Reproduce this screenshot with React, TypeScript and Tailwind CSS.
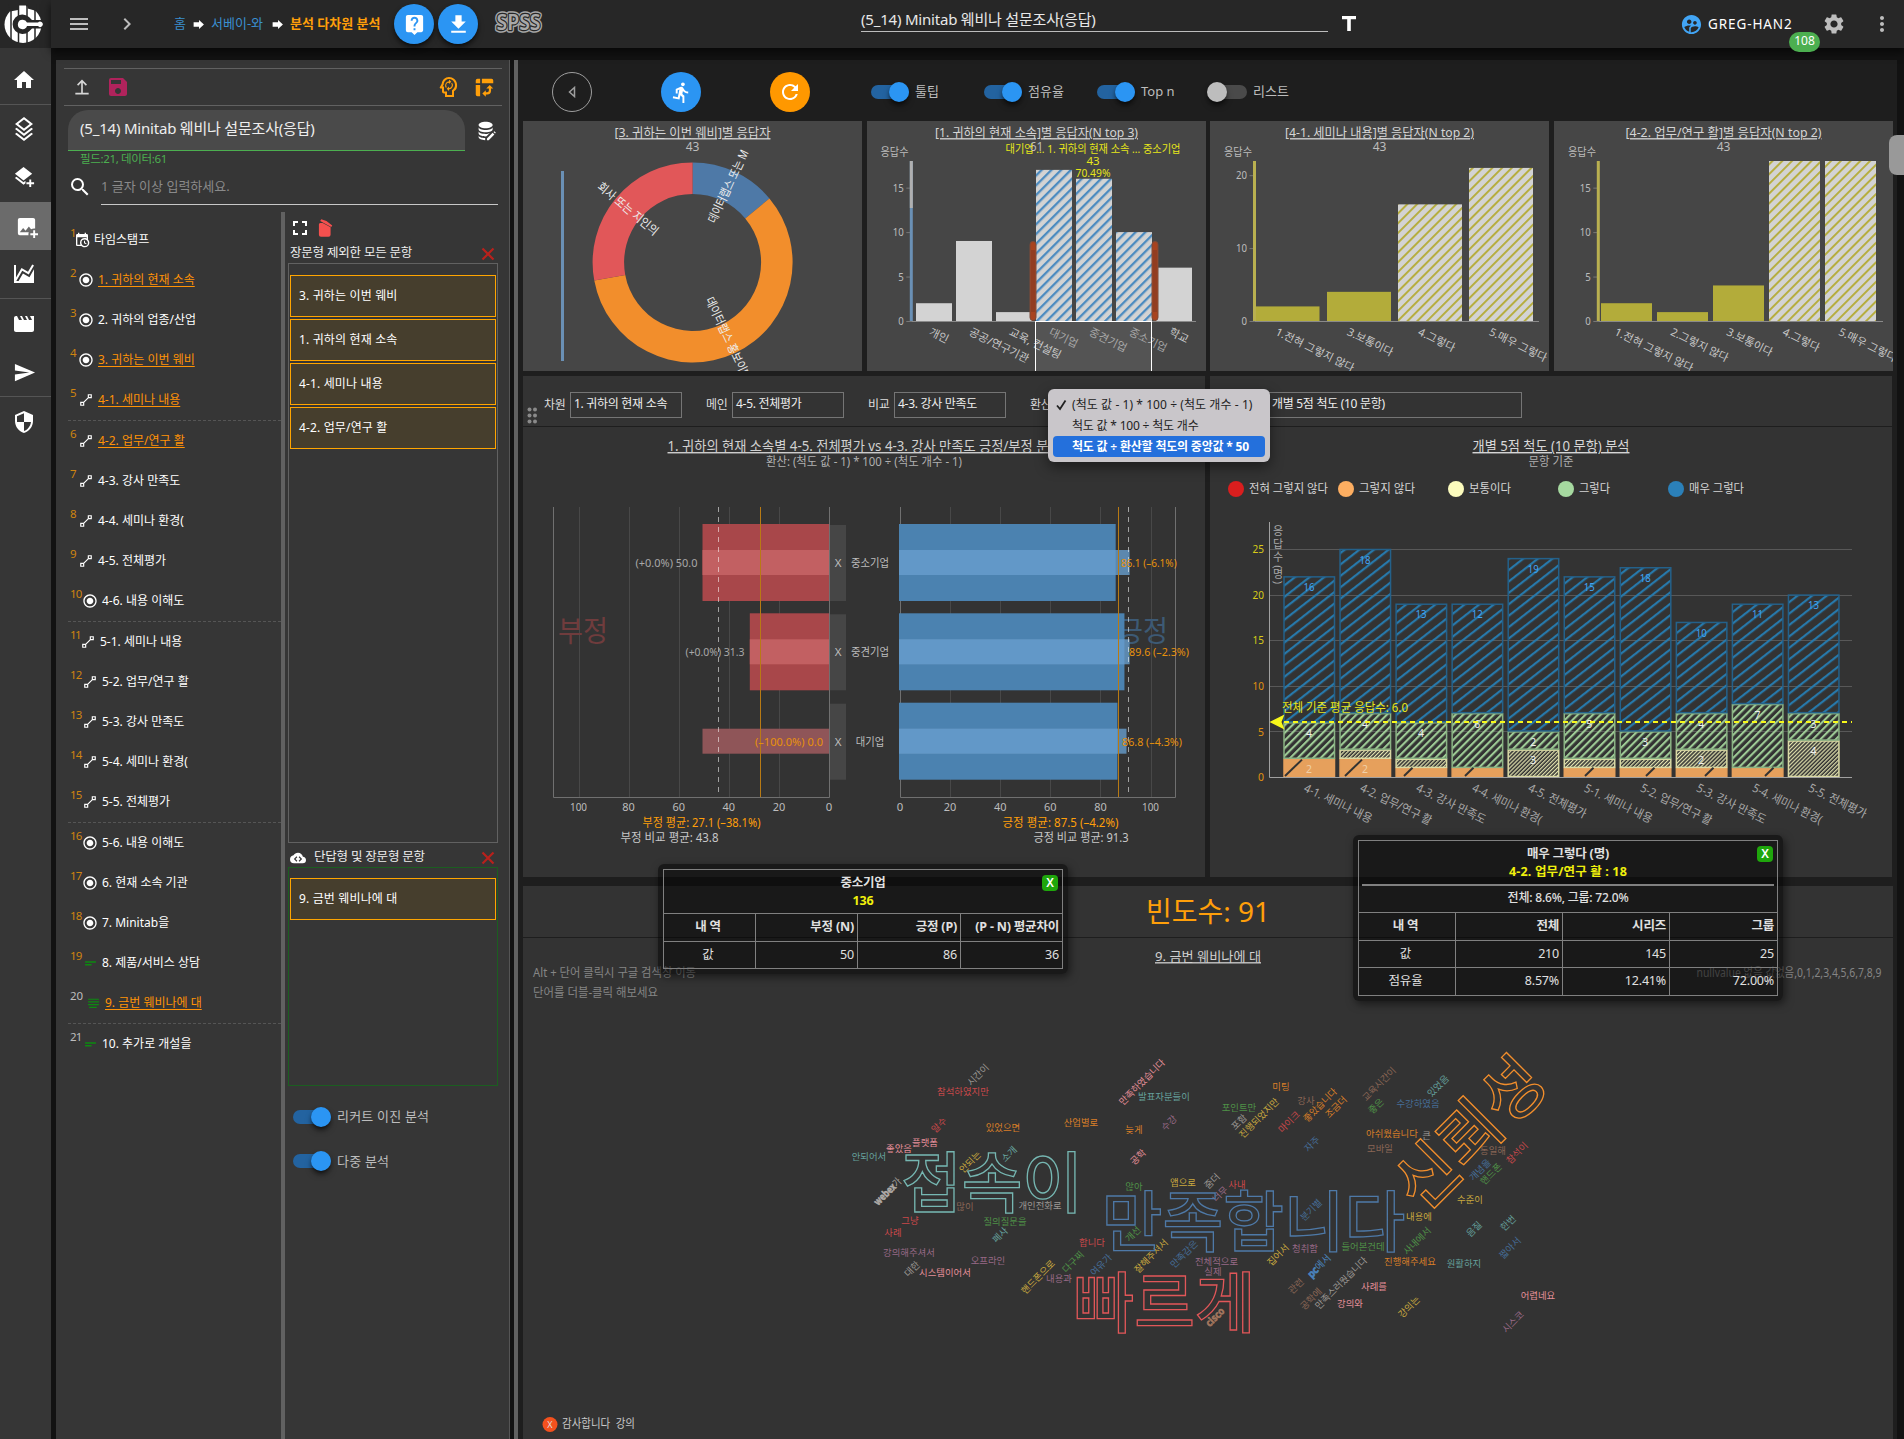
import React from "react";
import {
  MdHome, MdMovie, MdSend, MdSecurity, MdMenu, MdChevronRight, MdLiveHelp, MdDownload, MdSettings, MdMoreVert,
  MdSave, MdSearch, MdFullscreen, MdRadioButtonChecked, MdDirectionsRun, MdRefresh, MdSupervisedUserCircle,
} from "react-icons/md";

type Anchor = "start" | "middle" | "end";

const Mdi = ({ d, s = 24, className = "" }: { d: string; s?: number; className?: string }) => (
  <svg width={s} height={s} viewBox="0 0 24 24" fill="currentColor" className={className}>
    <path fillRule="evenodd" d={d} />
  </svg>
);

const P = {
  layers: "M12 0L3 7L12 14L21 7L12 0ZM12 2.53L17.74 7L12 11.47L6.26 7ZM19.37 10.73L12 16.47L4.62 10.74L3 12L12 19L21 12ZM19.37 15.73L12 21.47L4.62 15.74L3 17L12 24L21 17Z",
  layersPlus: "M11 1L2 8L11 15L20 8ZM2 12.5L11 19.5L13 18V15.5L11 17L3.6 11.25ZM17 14V17H14V19H17V22H19V19H22V17H19V14Z",
  imagePlus: "M5,3A2,2 0 0,0 3,5V19A2,2 0 0,0 5,21H14.09C14.03,20.67 14,20.34 14,20C14,19.32 14.12,18.64 14.35,18H5L8.5,13.5L11,16.5L14.5,12L16.73,14.97C17.7,14.34 18.84,14 20,14C20.34,14 20.67,14.03 21,14.09V5C21,3.89 20.1,3 19,3H5M19,16V19H16V21H19V24H21V21H24V19H21V16H19Z",
  chart: "M17.45,15.18L22,7.31V21H2V3H4V15.54L9.5,6L16,9.78L20.24,2.45L21.97,3.45L16.74,12.5L10.23,8.75L4.31,19H6.57L10.96,11.44L17.45,15.18Z",
  upload: "M12 3L6 9L7.4 10.4L11 6.8V19H13V6.8L16.6 10.4L18 9ZM4 19H20V21H4Z",
  head: "M13 2C9.1 2 6 5 5.7 8.8L3.8 12.3C3.5 12.8 3.9 13.4 4.5 13.4H6V16.5C6 17.6 6.9 18.5 8 18.5H9V22H18V16.3C20.4 15 21.5 12.300 21 9C20.500 5 17 2 13 2ZM13 4C16.300 4 19 6.700 19 10C19 12.400 17.800 14.200 16 15.200V20H11V16.500H8V11.500H6.600L7.700 9.500C7.700 6.500 10 4 13 4ZM13 5.500V7.500C11.500 7.500 10.200 8.700 10.200 10.300C10.200 11 10.400 11.500 10.800 12L9.900 12.900A4.200 4.200 0 0 1 13 6.200V4.600L15.300 6.800L13 9ZM15.200 8.600L16.100 7.700A4.200 4.200 0 0 1 13 14.400V16L10.700 13.800L13 11.500V13.100C14.500 13.100 15.800 11.900 15.800 10.300C15.800 9.600 15.600 9 15.200 8.600Z",
  table: "M2 4A2 2 0 0 1 4 2H7V7H2ZM9 2H20A2 2 0 0 1 22 4V7H9ZM2 9H7V22H4A2 2 0 0 1 2 20ZM18 9L22 13H19.500V15.500A4.500 4.500 0 0 1 15 20H13.500V22.500L9.500 18.800L13.500 15V17.500H15A2 2 0 0 0 17 15.500V13H14Z",
  db: "M11 2C6.500 2 3 3.600 3 5.700S6.500 9.500 11 9.500S19 7.800 19 5.700S15.500 2 11 2ZM3 8V10.500C3 12.500 6.500 14 11 14S19 12.500 19 10.500V8C19 10.100 15.500 11.500 11 11.500S3 10.100 3 8ZM3 12.700V15.200C3 17.200 6.500 18.800 11 18.800L12 18.700L16 14.600C14.500 15.600 13 16 11 16C6.500 16 3 14.800 3 12.700ZM3 17.500V19.500C3 21.500 6.500 23 10.500 23V20.700C6.500 20.700 3 19.600 3 17.500ZM12.500 21L19 14.500L21 16.500L14.500 23H12.500ZM21 12.800L22.700 14.500L21.700 15.500L20 13.800Z",
  trash: "M5 3.500L6.300 1.500L12.500 3.500L19.500 9L18.300 10.700ZM3.500 7.500A2 2 0 0 1 5.500 6H8L17.500 11V20A2.500 2.500 0 0 1 15 22.500H6A2.500 2.500 0 0 1 3.500 20Z",
  calendar: "M15,13H16.500V15.820L18.940,17.230L18.190,18.530L15,16.690V13M19,8H5V19H9.670C9.240,18.090 9,17.070 9,16A7,7 0 0,1 16,9C17.070,9 18.090,9.240 19,9.670V8M5,21C3.890,21 3,20.100 3,19V5C3,3.890 3.890,3 5,3H6V1H8V3H16V1H18V3H19A2,2 0 0,1 21,5V11.100C22.240,12.360 23,14.090 23,16A7,7 0 0,1 16,23C14.090,23 12.360,22.240 11.100,21H5M16,11.150A4.850,4.850 0 0,0 11.150,16C11.150,18.680 13.320,20.850 16,20.850A4.850,4.850 0 0,0 20.850,16C20.850,13.320 18.680,11.150 16,11.150Z",
  line: "M15 2V7.600L7.600 15H2V22H9V16.400L16.400 9H22V2ZM17 4H20V7H17ZM4 17H7V20H4Z",
  short: "M2 8H22V10.500H2ZM2 13H14V15.500H2Z",
  long: "M2 3H22V5.200H2ZM2 8H22V10.200H2ZM2 13H22V15.200H2ZM4 18H18V20.200H4Z",
  cloud: "M19.350 10C18.670 6.600 15.640 4 12 4C9.110 4 6.600 5.640 5.350 8C2.340 8.400 0 10.900 0 14A6 6 0 0 0 6 20H19A5 5 0 0 0 24 15C24 12.400 21.950 10.200 19.350 10ZM9.800 9.500L11 10.700L8.300 13.500L11 16.200L9.800 17.500L5.800 13.500ZM14.200 9.500L18.200 13.500L14.200 17.500L13 16.200L15.700 13.500L13 10.700Z",
  arrow: "M3 8H13V3.500L22 12L13 20.500V16H3Z",
};

const Tx = ({
  x, y, children, a = "start", s = 12, f = "#bdbdbd", r = 0, w, u,
}: {
  x: number; y: number; children: React.ReactNode; a?: Anchor; s?: number; f?: string; r?: number; w?: number; u?: boolean;
}) => (
  <text
    x={x} y={y} dy=".36em" textAnchor={a} fontSize={s} fill={f}
    textLength={w} lengthAdjust={w ? "spacingAndGlyphs" : undefined}
    transform={r ? `rotate(${r} ${x} ${y})` : undefined}
    className={u ? "underline underline-offset-2" : ""}
  >
    {children}
  </text>
);

const Toggle = ({ on = true, label, className = "" }: { on?: boolean; label: string; className?: string }) => (
  <div className={`flex items-center ${className}`}>
    <div className={`relative h-[14px] w-[38px] rounded-full ${on ? "bg-[#2363a0]" : "bg-[#4a4a4a]"}`}>
      <div className={`absolute -top-[3px] size-5 rounded-full shadow-md shadow-black/60 ${on ? "right-0 bg-[#2b95f3]" : "-left-0.5 bg-[#bdbdbd]"}`} />
    </div>
    <span className="ml-1.5 text-[13px] text-[#bdbdbd]">{label}</span>
  </div>
);

const NAV: { icon: React.ReactNode; cls: string }[] = [
  { icon: <MdHome size={24} />, cls: "h-[49px] pb-0 mt-2 border-b border-[#555]" },
  { icon: <Mdi d={P.layers} />, cls: "h-[48px]" },
  { icon: <Mdi d={P.layersPlus} s={23} />, cls: "h-[49px]" },
  { icon: <Mdi d={P.imagePlus} s={23} className="translate-x-0.5" />, cls: "h-12 bg-[#6b6b6b]" },
  { icon: <Mdi d={P.chart} s={24} />, cls: "h-[49px] border-b border-[#555]" },
  { icon: <MdMovie size={24} />, cls: "h-[49px]" },
  { icon: <MdSend size={23} />, cls: "h-[49px] border-b border-[#555]" },
  { icon: <MdSecurity size={24} />, cls: "h-[49px]" },
];

const Sidebar = () => (
  <aside className="flex w-[51px] shrink-0 flex-col bg-[#363636] text-white">
    <div className="flex h-12 items-center bg-[#272727] pl-[3px]">
      <svg width="40" height="40" viewBox="3 5 40 40">
        <circle cx="23" cy="25.500" r="18.500" fill="#fff" />
        <path d="M19 6.500h7v6h-7z" fill="#fff" />
        <path d="M11 8v36M18.500 6v38M27 6v38M35 8v36" stroke="#272727" strokeWidth="1.500" />
        <path d="M8 5h10v6L10 12.500ZM27.500 5h9v7l-9-2.500z" fill="#272727" />
        <path d="M29 18A9.800 9.800 0 1 0 29 32.500L32 29.500H44V21H32Z" fill="#272727" />
        <path d="M22.500 20.800a4.700 4.700 0 0 1 4.500 2.700H38a2.700 2.700 0 1 1 0 3.600H27a4.700 4.700 0 1 1-4.500-6.300Z" fill="#fff" />
      </svg>
    </div>
    {NAV.map((n, i) => (
      <div key={i} className={`flex items-center justify-center pr-[3px] ${n.cls}`}>{n.icon}</div>
    ))}
  </aside>
);

const Header = () => (
  <header className="relative z-10 flex h-12 shrink-0 items-center bg-[#272727] shadow-[0_4px_8px_rgba(0,0,0,0.6)]">
    <div className="flex w-[434px] shrink-0 items-center text-[13px]">
      <MdMenu size={24} className="ml-4 text-[#bdbdbd]" />
      <MdChevronRight size={24} className="ml-6 text-[#bdbdbd]" />
      <span className="ml-[35px] w-[13px] text-[#3a8fd0]">홈</span>
      <Mdi d={P.arrow} s={13} className="ml-[5px] text-white" />
      <span className="ml-[6px] w-[53px] whitespace-nowrap text-[#3a8fd0]">서베이-와</span>
      <Mdi d={P.arrow} s={13} className="ml-[7px] text-white" />
      <span className="ml-[6px] w-[92px] whitespace-nowrap font-bold text-[#ff9f0a]">분석 다차원 분석</span>
      <div className="ml-3 flex size-10 shrink-0 items-center justify-center rounded-full bg-[#2b95f3] text-white shadow-md shadow-black/60"><MdLiveHelp size={23} /></div>
      <div className="ml-1 flex size-10 shrink-0 items-center justify-center rounded-full bg-[#2b95f3] text-white shadow-md shadow-black/60"><MdDownload size={25} /></div>
    </div>
    <svg width="56" height="28" className="-mt-[3px] ml-[6px] shrink-0 overflow-visible">
      <text x="27.500" y="21" textAnchor="middle" fontSize="22" textLength="44" lengthAdjust="spacingAndGlyphs" strokeWidth="5.500" stroke="#a8a8a8" fill="none" strokeLinejoin="round" className="font-semibold">SPSS</text>
      <text x="27.500" y="21" textAnchor="middle" fontSize="22" textLength="44" lengthAdjust="spacingAndGlyphs" strokeWidth="2.500" stroke="#272727" fill="#a8a8a8" strokeLinejoin="round" className="font-semibold [paint-order:stroke]">SPSS</text>
    </svg>
    <div className="-mt-3 ml-[314px] h-[27px] w-[467px] shrink-0 border-b border-[#bdbdbd] text-[15px] leading-[29px] tracking-[-0.2px] text-[#e8e8e8]">(5_14) Minitab 웨비나 설문조사(응답)</div>
    <svg width="14" height="16" className="ml-[14px]"><path d="M0 0h14v3.200H8.800V15H5.200V3.200H0Z" fill="#fff" /></svg>
    <MdSupervisedUserCircle size={23} className="ml-[324px] text-[#42a5f5]" />
    <span className="ml-[5px] w-[86px] text-[13.500px] tracking-[0.9px] text-white">GREG-HAN2</span>
    <MdSettings size={24} className="ml-[28px] text-[#bdbdbd]" />
    <MdMoreVert size={24} className="ml-6 text-[#bdbdbd]" />
    <div className="absolute left-[1738px] top-8 h-5 w-[31px] rounded-[10px] bg-[#4caf50] text-center text-[12px] leading-[18px] text-white">108</div>
  </header>
);

type Field = [string, "cal" | "radio" | "line" | "short" | "long", string, boolean?];
const FIELDS: Field[][] = [
  [["1", "cal", "타임스탬프"], ["2", "radio", "1. 귀하의 현재 소속", true], ["3", "radio", "2. 귀하의 업종/산업"], ["4", "radio", "3. 귀하는 이번 웨비", true], ["5", "line", "4-1. 세미나 내용", true]],
  [["6", "line", "4-2. 업무/연구 활", true], ["7", "line", "4-3. 강사 만족도"], ["8", "line", "4-4. 세미나 환경("], ["9", "line", "4-5. 전체평가"], ["10", "radio", "4-6. 내용 이해도"]],
  [["11", "line", "5-1. 세미나 내용"], ["12", "line", "5-2. 업무/연구 활"], ["13", "line", "5-3. 강사 만족도"], ["14", "line", "5-4. 세미나 환경("], ["15", "line", "5-5. 전체평가"]],
  [["16", "radio", "5-6. 내용 이해도"], ["17", "radio", "6. 현재 소속 기관"], ["18", "radio", "7. Minitab을"], ["19", "short", "8. 제품/서비스 상담"], ["20", "long", "9. 금번 웨비나에 대", true]],
  [["21", "short", "10. 추가로 개설을"]],
];

const numWidth = (n: string) => {
  if (n.length === 1) return "w-[7px]";
  if (n === "11") return "w-[9px] tracking-[-1.5px]";
  if (n === "20") return "w-[14px]";
  return "w-[11px] tracking-[-0.8px]";
};

const FieldIcon = ({ k }: { k: Field[1] }) => {
  if (k === "cal") return <Mdi d={P.calendar} s={16} className="-ml-1 mr-1 text-white" />;
  if (k === "radio") return <MdRadioButtonChecked size={16} className="mr-1 shrink-0 text-white" />;
  if (k === "line") return <Mdi d={P.line} s={14} className="mr-[5px] ml-px text-white" />;
  return <Mdi d={k === "short" ? P.short : P.long} s={13} className="ml-[2px] mr-[5px] text-[#0d8a10]" />;
};

const Card = ({ children }: { children: string }) => (
  <div className="mb-0.5 flex h-[42px] items-center border border-[#ffa500] bg-[#463e2d] pl-2 text-[12px] tracking-[0.15px] text-white">{children}</div>
);

const RedX = () => (
  <svg width="14" height="14" viewBox="0 0 14 14" className="ml-auto mr-[3px]">
    <path d="M1.500 1.500L12.500 12.500M12.500 1.500L1.500 12.500" stroke="#b8211c" strokeWidth="2.200" />
  </svg>
);

const LeftPanel = () => (
  <section className="flex w-[454px] shrink-0 flex-col border-r border-[#555] bg-[#363636]">
    <div className="mx-2 mt-2 flex h-[38px] w-[438px] items-center border-y border-[#616161] pl-2">
      <Mdi d={P.upload} s={20} className="text-[#d5d5d5]" />
      <MdSave size={24} className="ml-[14px] text-[#b0235c]" />
      <Mdi d={P.head} s={24} className="ml-[306px] text-[#ff9f0a]" />
      <Mdi d={P.table} s={21} className="ml-[14px] text-[#ff9f0a]" />
    </div>
    <div className="ml-3 mt-1 flex h-[41px] items-center">
      <div className="h-[41px] w-[397px] rounded-t-[20px] border-b border-[#4caf50] bg-[#4a4a4a] pl-3 text-[15px] leading-[37px] tracking-[-0.2px] text-[#eee]">(5_14) Minitab 웨비나 설문조사(응답)</div>
      <Mdi d={P.db} s={21} className="ml-[11px] text-white" />
    </div>
    <div className="ml-6 h-[17px] text-[11.500px] leading-[15px] tracking-[-0.35px] text-[#4caf50]">필드:21, 데이터:61</div>
    <div className="ml-3 flex h-[37px] items-center">
      <MdSearch size={24} className="text-white" />
      <div className="ml-[9px] h-[37px] w-[397px] border-b border-[#c8c8c8] text-[13px] leading-[36px] text-[#8a8a8a]">1 글자 이상 입력하세요.</div>
    </div>
    <div className="mt-[7px] flex flex-1">
      <div className="ml-3 w-[213px] pt-2">
        {FIELDS.map((g, i) => (
          <div key={i} className={i < FIELDS.length - 1 ? "border-b border-dashed border-[#555]" : ""}>
            {g.map(([n, k, t, sel]) => (
              <div key={n} className="flex h-10 items-center whitespace-nowrap pl-0.5">
                <span className={`-mt-[14px] mr-px text-[11.500px] ${numWidth(n)} ${Number(n) >= 20 ? "text-[#bdbdbd]" : "text-[#cf8410]"}`}>{n}</span>
                <FieldIcon k={k} />
                <span className={`text-[12px] ${sel ? "text-[#ff9206] underline underline-offset-2" : "text-white"}`}>{t}</span>
              </div>
            ))}
          </div>
        ))}
      </div>
      <div className="w-1 bg-[#616161]" />
      <div className="ml-[3px] w-[210px]">
        <div className="flex h-[31px] items-center">
          <MdFullscreen size={24} className="text-white" />
          <Mdi d={P.trash} s={20} className="ml-1 text-[#f5504e]" />
        </div>
        <div className="flex h-5 items-center pl-0.5 pt-px">
          <span className="text-[12.500px] tracking-[-0.2px] text-[#eee]">장문형 제외한 모든 문항</span>
          <RedX />
        </div>
        <div className="h-[580px] border border-[#616161] px-px pt-[11px]">
          <Card>3. 귀하는 이번 웨비</Card>
          <Card>1. 귀하의 현재 소속</Card>
          <Card>4-1. 세미나 내용</Card>
          <Card>4-2. 업무/연구 활</Card>
        </div>
        <div className="mt-1 flex h-5 items-center pt-px">
          <Mdi d={P.cloud} s={16} className="ml-0.5 text-white" />
          <span className="ml-2 text-[12.500px] tracking-[-0.2px] text-[#eee]">단답형 및 장문형 문항</span>
          <RedX />
        </div>
        <div className="h-[219px] border border-[#1b5e20] px-px pt-[10px]">
          <Card>9. 금번 웨비나에 대</Card>
        </div>
        <Toggle label="리커트 이진 분석" className="ml-[5px] mt-[21px] tracking-[0.2px]" />
        <Toggle label="다중 분석" className="ml-[5px] mt-[25px] tracking-[0.2px]" />
      </div>
    </div>
  </section>
);

const Hatch = ({ id, c, bg, w, gap, ang }: { id: string; c: string; bg?: string; w: number; gap: number; ang: number }) => (
  <pattern id={id} width={gap} height={gap} patternUnits="userSpaceOnUse" patternTransform={`rotate(${ang})`}>
    {bg && <rect width={gap} height={gap} fill={bg} />}
    <rect width={gap} height={w} fill={c} />
  </pattern>
);

const arc = (a0: number, a1: number) => {
  const cx = 692.6, cy = 262.4, R = 100, r = 68.5;
  const p = (a: number, q: number) => `${cx + q * Math.sin((a * Math.PI) / 180)} ${cy - q * Math.cos((a * Math.PI) / 180)}`;
  const l = a1 - a0 > 180 ? 1 : 0;
  return `M${p(a0, R)}A${R} ${R} 0 ${l} 1 ${p(a1, R)}L${p(a1, r)}A${r} ${r} 0 ${l} 0 ${p(a0, r)}Z`;
};

const Donut = () => (
  <svg width="339" height="250" viewBox="523 121 339 250" className="bg-[#464646]">
    <Tx x={692.5} y={132.500} a="middle" s={13} f="#d5d5d5" w={156} u>[3. 귀하는 이번 웨비]별 응답자</Tx>
    <Tx x={692.5} y={146.500} a="middle">43</Tx>
    <rect x="561" y="171" width="3" height="190" fill="#6a90b5" />
    <path d={arc(0, 50.200)} fill="#4e79a7" />
    <path d={arc(50.200, 259.500)} fill="#f28e2c" />
    <path d={arc(259.500, 360)} fill="#e15759" />
    <Tx x={728.200} y={186.300} a="middle" f="#eee" r={-64.900} w={79}>데이터랩스 또는 M</Tx>
    <Tx x={728.200} y={338.500} a="middle" f="#eee" r={64.900} w={90}>데이터랩스 홍보이메</Tx>
    <Tx x={628} y={208.700} a="middle" f="#eee" r={39.700} w={75}>회사 또는 지인의</Tx>
  </svg>
);

const Mini = ({ ox, title, tw, axisX, ticks, unit, bars, bw, color, hatch, labels, lo, sub, labelX, end, children }: {
  ox: number; title: string; tw: number; axisX: number; ticks: number[]; unit: number; bars: [number, number, boolean][]; bw: number;
  color: string; hatch: string; labels: string[]; lo: number; sub: string; labelX: number; end: number; children?: React.ReactNode;
}) => (
  <svg width="339" height="250" viewBox={`${ox} 121 339 250`} className="bg-[#464646]">
    <Tx x={ox + 169.500} y={132.500} a="middle" s={13} f="#d5d5d5" w={tw} u>{title}</Tx>
    <Tx x={labelX} y={152} a="middle" s={11} w={28}>응답수</Tx>
    {ticks.map((t) => (
      <g key={t}>
        <Tx x={axisX - 7.500} y={321 - t * unit} a="end" s={11} w={t > 9 ? 11 : 5.500}>{t}</Tx>
        <path d={`M${axisX - 5} ${321.500 - t * unit}h5`} stroke="#777" />
      </g>
    ))}
    {bars.map(([x, v, h], i) => {
      const top = Math.max(161, 321 - v * unit);
      return <rect key={i} x={x} y={top} width={bw} height={321 - top} fill={h ? `url(#${hatch})` : color} />;
    })}
    <path d={`M${axisX} 321.500H${end}`} stroke="#8a8a8a" />
    <rect x={axisX - 1.500} y="161" width="3" height="160" fill={color === "#d3d3d3" ? "#6a90b5" : "#b9b050"} />
    <Tx x={ox + 169.500} y={146.500} a="middle">{sub}</Tx>
    {bars.map(([x], i) => {
      const lx = x + bw / 2 + lo;
      return <Tx key={i} x={lx} y={331} s={11} f={color === "#d3d3d3" && i > 2 && i < 6 ? "#a0a0a0" : "#c8c8c8"} r={26}>{labels[i]}</Tx>;
    })}
    {children}
  </svg>
);

const TopCharts = () => (
  <div className="flex gap-[5px] pl-[5px]">
    <svg width="0" height="0" className="absolute">
      <defs>
        <Hatch id="hb" c="#4c8bc0" bg="#d3d3d3" w={2.300} gap={6.900} ang={-45} />
        <Hatch id="hy" c="#b5ac3a" bg="#d3d3d3" w={1.900} gap={6.900} ang={-45} />
        <Hatch id="sBlue" c="#2779ab" w={2.200} gap={9} ang={-38} />
        <Hatch id="sGreen" c="#9dcb95" w={2.100} gap={5.400} ang={-45} />
        <Hatch id="sYellow" c="#e4e4b0" w={1.200} gap={2.800} ang={-45} />
      </defs>
    </svg>
    <Donut />
    <Mini ox={867} title="[1. 귀하의 현재 소속]별 응답자(N top 3)" tw={203} axisX={911.300} ticks={[0, 5, 10, 15]} unit={8.890}
      bars={[[916, 2, false], [956, 9, false], [996, 1, false], [1036, 17, true], [1076, 16, true], [1116, 10, true], [1156, 6, false]]}
      bw={36} color="#d3d3d3" hatch="hb" lo={-4} sub="61" labelX={894.500} end={1196}
      labels={["개인", "공공/연구기관", "교육, 컨설팅", "대기업", "중견기업", "중소기업", "학교"]}>
      <rect x="909.800" y="161" width="3" height="47" fill="#b0b0b0" />
      {[1030, 1152].map((x) => (
        <g key={x}>
          <rect x={x} y="241.500" width="6" height="79" rx="3" fill="#a8431f" stroke="#7d4a38" />
          <path d={`M${x + 2} 250v62M${x + 4} 250v62`} stroke="#6b3322" strokeWidth=".7" />
        </g>
      ))}
      <rect x="1036" y="322" width="116" height="49" fill="#fff" opacity=".08" />
      <path d="M1035.500 321V371M1151.500 321V371M1035.500 321.500h116" stroke="#fff" />
      <Tx x={1093} y={149} a="middle" s={11.500} f="#e6e619" w={175}>대기업 ... 1. 귀하의 현재 소속 ... 중소기업</Tx>
      <Tx x={1093} y={161} a="middle" s={11.500} f="#e6e619">43</Tx>
      <Tx x={1093} y={173} a="middle" s={11.500} f="#e6e619" w={35}>70.49%</Tx>
    </Mini>
    <div className="-ml-px">
      <Mini ox={1210} title="[4-1. 세미나 내용]별 응답자(N top 2)" tw={189} axisX={1254.500} ticks={[0, 10, 20]} unit={7.290}
        bars={[[1255.500, 2, false], [1327, 4, false], [1398, 16, true], [1469, 21, true]]}
        bw={64} color="#b3ac3a" hatch="hy" lo={-11} sub="43" labelX={1238} end={1539}
        labels={["1.전혀 그렇지 않다", "3.보통이다", "4.그렇다", "5.매우 그렇다"]} />
    </div>
    <Mini ox={1554} title="[4-2. 업무/연구 활]별 응답자(N top 2)" tw={196} axisX={1598.300} ticks={[0, 5, 10, 15]} unit={8.890}
      bars={[[1601, 2, false], [1657, 1, false], [1713, 4, false], [1769, 21, true], [1825, 21, true]]}
      bw={51} color="#b3ac3a" hatch="hy" lo={-11} sub="43" labelX={1582} end={1883}
      labels={["1.전혀 그렇지 않다", "2.그렇지 않다", "3.보통이다", "4.그렇다", "5.매우 그렇다"]} />
  </div>
);

const ROWS = [
  { y: 524, n: 50, ni: 50, p: 86.100, pi: 1129.600, name: "중소기업", nl: "(+0.0%) 50.0", pl: "86.1 (–6.1%)", nx: 697.500, px: 1120.700, hot: false, nw: 62, pw: 56 },
  { y: 613.300, n: 31.300, ni: 31.300, p: 89.600, pi: 1129.600, name: "중견기업", nl: "(+0.0%) 31.3", pl: "89.6 (–2.3%)", nx: 744.500, px: 1129, hot: false, nw: 59, pw: 60 },
  { y: 702.700, n: 0, ni: 50, p: 86.800, pi: 1126.500, name: "대기업", nl: "(–100.0%) 0.0", pl: "86.8 (–4.3%)", nx: 823, px: 1122, hot: true, nw: 68, pw: 60 },
];

const Butterfly = () => (
  <svg width="682" height="450" viewBox="523 427 682 450">
    <Tx x={864} y={446} a="middle" s={14} f="#d0d0d0" w={393} u>1. 귀하의 현재 소속별 4-5. 전체평가 vs 4-3. 강사 만족도 긍정/부정 분석</Tx>
    <Tx x={864} y={462} a="middle" s={12} f="#b0b0b0" w={196}>환산: (척도 값 - 1) * 100 ÷ (척도 개수 - 1)</Tx>
    {[20, 40, 60, 80, 100].map((t) => (
      <path key={t} d={`M${Math.round(829 - t * 2.505)}.5 507V797M${Math.round(900 + t * 2.505)}.5 507V797`} stroke="#484848" />
    ))}
    <path d="M553.500 507V797.500H829.500V507M900.500 507V797.500H1175.500V507" fill="none" stroke="#707070" />
    <Tx x={583} y={631.500} a="middle" s={29} f="#703c3d" w={50}>부정</Tx>
    <Tx x={1143} y={631.500} a="middle" s={29} f="#3d5a75" w={50}>긍정</Tx>
    {ROWS.map((r) => (
      <g key={r.name}>
        <rect x={829 - r.n * 2.530} y={r.y} width={r.n * 2.530} height="77" fill="#a8474a" />
        <rect x={829 - r.ni * 2.530} y={r.y + 26} width={r.ni * 2.530} height="25" fill={r.n ? "#c26062" : "#8f5558"} />
        <rect x="830" y={r.y + 1} width="16" height="76" fill="#464646" />
        <Tx x={838} y={r.y + 39} a="middle" s={11.500}>X</Tx>
        <Tx x={870} y={r.y + 39} a="middle" s={11.500} w={r.name.length * 9.500}>{r.name}</Tx>
        <rect x="899" y={r.y} width={r.p * 2.505 + 1} height="77" fill="#4b82b0" />
        <rect x="899" y={r.y + 26} width={r.pi - 899} height="25" fill="#5c88ae" />
        <rect x="899" y={r.y + 26} width={r.p * 2.505 + 1} height="25" fill="#6298c8" />
      </g>
    ))}
    <path d="M760.500 507V797M1118.500 507V797" stroke="#b87a14" />
    <path d="M718.500 507V797M1128.500 507V797" stroke="#fff" strokeOpacity=".55" strokeDasharray="5 5" />
    {ROWS.map((r) => (
      <g key={r.name}>
        <Tx x={r.nx} y={r.y + 39} a="end" s={11.500} f={r.hot ? "#e8920c" : "#a8a8a8"} w={r.nw}>{r.nl}</Tx>
        <Tx x={r.px} y={r.y + 39} s={11.500} f="#e8920c" w={r.pw}>{r.pl}</Tx>
      </g>
    ))}
    {[0, 20, 40, 60, 80, 100].map((t) => (
      <g key={t}>
        <Tx x={829 - t * 2.505} y={807} a="middle" s={11.500} w={t === 100 ? 17 : t ? 12.500 : 6.500}>{t}</Tx>
        <Tx x={900 + t * 2.505} y={807} a="middle" s={11.500} w={t === 100 ? 17 : t ? 12.500 : 6.500}>{t}</Tx>
      </g>
    ))}
    <Tx x={760.500} y={822.500} a="end" s={12} f="#ff9f0a" w={118}>부정 평균: 27.1 (–38.1%)</Tx>
    <Tx x={718.500} y={837.500} a="end" s={12} f="#c8c8c8" w={98}>부정 비교 평균: 43.8</Tx>
    <Tx x={1118.500} y={822.500} a="end" s={12} f="#ff9f0a" w={116}>긍정 평균: 87.5 (–4.2%)</Tx>
    <Tx x={1128.500} y={837.500} a="end" s={12} f="#c8c8c8" w={95}>긍정 비교 평균: 91.3</Tx>
  </svg>
);

const STACKS: [string, number[]][] = [
  ["4-1. 세미나 내용", [2, 0, 4, 16]], ["4-2. 업무/연구 활", [2, 1, 4, 18]], ["4-3. 강사 만족도", [1, 1, 4, 13]],
  ["4-4. 세미나 환경(", [1, 0, 6, 12]], ["4-5. 전체평가", [0, 3, 2, 19]], ["5-1. 세미나 내용", [1, 1, 5, 15]],
  ["5-2. 업무/연구 활", [1, 1, 3, 18]], ["5-3. 강사 만족도", [1, 2, 4, 10]], ["5-4. 세미나 환경(", [1, 0, 7, 11]],
  ["5-5. 전체평가", [0, 4, 3, 13]],
];
const FILLS = ["#e6a05c", "url(#sYellow)", "url(#sGreen)", "url(#sBlue)"];
const EDGES = ["#e6a05c", "#d9d9a4", "#8ab384", "#24618a"];
const NUMS = ["#f0d0a8", "#eee", "#eee", "#42a5f5"];
const SLASH = [1285, 1345, 1404, 1465, 0, 1585, 1646, 1705, 1765, 0];
const LEGEND: [number, string, string, number][] = [
  [1236, "#d91e1e", "전혀 그렇지 않다", 79], [1346, "#fdae61", "그렇지 않다", 56], [1456, "#fbfbbd", "보통이다", 42], [1566, "#a6d9a0", "그렇다", 31], [1676, "#2b80b9", "매우 그렇다", 55],
];
const U = 9.120;

const Stacked = () => (
  <svg width="682" height="450" viewBox="1210 427 682 450">
    <Tx x={1551} y={446} a="middle" s={14} f="#d8d8d8" w={157} u>개별 5점 척도 (10 문항) 분석</Tx>
    <Tx x={1551} y={462} a="middle" s={12} f="#b0b0b0" w={45}>문항 기준</Tx>
    {LEGEND.map(([x, c, t, w]) => (
      <g key={t}>
        <circle cx={x} cy="489" r="8" fill={c} />
        <Tx x={x + 13} y={488.500} s={12} f="#d5d5d5" w={w}>{t}</Tx>
      </g>
    ))}
    {[5, 10, 15, 20, 25].map((t) => <path key={t} d={`M1270 ${Math.round(777 - t * U)}.5H1852`} stroke="#585858" />)}
    {["응", "답", "수"].map((c, i) => <Tx key={c} x={1278} y={531.500 + i * 12.700} a="middle" s={11} f="#a8a8a8">{c}</Tx>)}
    <Tx x={1278} y={567} a="middle" s={11} f="#a8a8a8" r={90}>(</Tx>
    <Tx x={1278} y={574} a="middle" s={11} f="#a8a8a8">명</Tx>
    <Tx x={1278} y={582.500} a="middle" s={11} f="#a8a8a8" r={90}>)</Tx>
    {[0, 5, 10, 15, 20, 25].map((t) => <Tx key={t} x={1264} y={777 - t * U} a="end" s={11.500} w={t > 9 ? 11.500 : 6} f={t > 10 ? "#d8cc18" : "#e0920f"}>{t}</Tx>)}
    {STACKS.map(([name, v], i) => {
      const x = 1283.500 + i * 56.050;
      let acc = 0;
      return (
        <g key={name}>
          {v.map((n, k) => {
            if (!n) return null;
            const y0 = 777 - acc * U;
            acc += n;
            const y1 = 777 - acc * U;
            return <rect key={k} x={x + 0.500} y={y1 + 0.500} width="50.500" height={y0 - y1 - 1} fill={FILLS[k]} stroke={EDGES[k]} strokeWidth="1.500" />;
          })}
          {v[0] > 0 && <path d={`M${SLASH[i]} 776l${v[0] * 8.500} -${v[0] * 8.200}`} stroke="#333" strokeWidth="2" />}
        </g>
      );
    })}
    <path d="M1269.500 522V777.500H1852" fill="none" stroke="#a0a0a0" />
    {STACKS.map(([name, v], i) => {
      let acc = 0;
      return v.map((n, k) => {
        acc += n;
        return n > 1 ? <Tx key={name + k} x={1309 + i * 56.050} y={777 - acc * U + 10.500} a="middle" s={11.500} w={n > 9 ? 11 : 6} f={NUMS[k]}>{n}</Tx> : null;
      });
    })}
    <path d="M1284 722H1852" stroke="#f7f71a" strokeWidth="2" strokeDasharray="5 4" />
    <path d="M1269.500 722l15 -7.500l-3 7.500l3 7.500z" fill="#f7f71a" />
    <Tx x={1282} y={707.500} s={12.500} f="#e6e619" w={126}>전체 기준 평균 응답수: 6.0</Tx>
    {STACKS.map(([name], i) => <Tx key={name} x={1305 + i * 56.050} y={787} s={12} f="#a8a8a8" r={26} w={name.includes("/") ? 78 : name.includes("평가") ? 63 : name.includes("내용") ? 74 : 76}>{name}</Tx>)}
  </svg>
);

const Pick = ({ label, value }: { label: string; value: string }) => (
  <label className="flex w-[162px] shrink-0 items-center text-[12px] tracking-[-0.3px] text-[#ddd]">
    <span className="w-[26px]">{label}</span>
    <span className="h-[26px] w-[112px] whitespace-nowrap border border-[#757575] pl-[3px] leading-[22px] text-[#eee]">{value}</span>
  </label>
);

const RED = "#c9484a", PNK = "#e58f99", TEA = "#65a09c", ORG = "#d97f28", PUR = "#976986", YEL = "#c9a93f", GRN = "#4f9147", BRN = "#8a6655", GRY = "#9c9894", BLU = "#466d97";
const WORDS: [string, number, number, number, string][] = [
  ["시간이", 978, 1075, 1, GRY], ["참석하였지만", 963, 1092, 0, RED], ["만족하였습니다", 1142, 1082, 1, PNK], ["발표자분들이", 1164, 1097, 0, TEA],
  ["알수", 939, 1125, 1, RED], ["있었으면", 1003, 1128, 0, ORG], ["산업별로", 1081, 1123, 0, ORG], ["늦게", 1134, 1130, 0, ORG], ["수강", 1169, 1123, 1, PUR],
  ["플랫폼", 925, 1143, 0, PNK], ["좋았음", 899, 1149, 0, PNK], ["안되어서", 869, 1157, 0, TEA], ["안되는", 970, 1162, 1, YEL], ["소개", 1009, 1154, 1, TEA],
  ["공학", 1138, 1157, 1, PNK], ["많이", 965, 1207, 0, BRN], ["개인전화로", 1040, 1206, 0, GRY], ["않아", 1134, 1187, 0, GRN], ["앱으로", 1183, 1183, 0, YEL],
  ["그냥", 910, 1221, 0, RED], ["사례", 893, 1233, 0, RED], ["질의질문을", 1005, 1222, 0, GRN], ["폐사", 1000, 1235, 1, TEA], ["개선", 1133, 1234, 1, GRN],
  ["합니다", 1092, 1243, 0, RED], ["잘해주셔서", 1151, 1256, 1, YEL], ["만족감은", 1184, 1254, 1, BLU], ["강의해주셔서", 909, 1253, 0, PUR], ["대한", 912, 1269, 1, GRY],
  ["시스템이어서", 945, 1273, 0, PNK], ["오프라인", 988, 1261, 0, PUR], ["핸드폰으로", 1038, 1277, 1, YEL], ["다구찌", 1073, 1262, 1, GRN], ["여유가", 1101, 1265, 1, BLU],
  ["내용과", 1059, 1279, 0, PUR], ["전체적으로", 1216.500, 1262, 0, PUR], ["실제", 1213, 1272, 0, PUR], ["줌더", 1212, 1181, 1, GRY], ["너무", 1220, 1194, 1, PUR],
  ["사내", 1237, 1185, 0, RED], ["미팅", 1281, 1087, 0, ORG], ["강사", 1306, 1101, 0, BRN], ["포인트만", 1239, 1108, 0, GRN], ["포함", 1239, 1122, 1, GRY],
  ["진행되었지만", 1259, 1118, 1, YEL], ["마이크", 1289, 1122, 1, RED], ["좋았습니다", 1320, 1105, 1, ORG], ["조금더", 1336, 1107, 1, ORG], ["자주", 1312, 1144, 1, BLU],
  ["교육시간이", 1379, 1084, 1, BRN], ["좋은", 1376, 1106, 1, GRN], ["수강하였음", 1418, 1104, 0, BLU], ["있었음", 1438, 1086, 1, TEA], ["아쉬웠습니다", 1392, 1134, 0, ORG],
  ["큰", 1426.500, 1136, 0, GRY], ["모바일", 1380, 1149, 0, BRN], ["동일해", 1493, 1151, 0, BRN], ["참석이", 1517, 1153, 1, RED], ["개념을", 1480, 1170, 1, BLU],
  ["핸드폰", 1491, 1174, 1, GRN], ["수준이", 1470, 1200, 0, YEL], ["내용에", 1419, 1217, 0, YEL], ["분기별", 1311, 1210, 1, BLU], ["음질", 1474, 1229, 1, TEA],
  ["한번", 1508, 1223, 1, TEA], ["사내에서", 1417, 1241, 1, GRN], ["청취함", 1305, 1249, 0, PUR], ["들어본건데", 1363, 1247, 0, GRN], ["짧아서", 1510, 1248, 1, BLU],
  ["집어서", 1278, 1255, 1, YEL], ["진행해주세요", 1410, 1262, 0, ORG], ["원활하지", 1464, 1264, 0, TEA], ["만족스러웠습니다", 1341, 1283, 1, GRY], ["관련", 1296, 1286, 1, BRN],
  ["공학에", 1311, 1299, 1, BRN], ["사례를", 1374, 1287, 0, PNK], ["강의와", 1350, 1304, 0, PNK], ["강의는", 1409, 1307, 1, YEL], ["어렵네요", 1538, 1296, 0, PNK],
  ["시스코", 1513, 1322, 1, PUR],
];

const LATIN: [string, string, number, number, string, number][] = [
  ["webex", "가", 887.500, 1191.500, "#b0aca8", 34], ["pc", "에서", 1319, 1266, "#4a83bd", 28], ["cisco", "", 1215, 1317, "#a5775f", 22],
];

const Cloud = () => (
  <svg width="1370" height="501" viewBox="523 938 1370 501">
    <Tx x={1208} y={956.500} a="middle" s={13} f="#d0d0d0" w={106} u>9. 금번 웨비나에 대</Tx>
    <Tx x={533} y={973} s={12} f="#858585" w={163}>Alt + 단어 클릭시 구글 검색창 이동</Tx>
    <Tx x={533} y={993} s={12} f="#858585" w={125}>단어를 더블-클릭 해보세요</Tx>
    <Tx x={1881.500} y={973} a="end" s={12} f="#858585" w={185}>nullvalue,없음,값없음,0,1,2,3,4,5,6,7,8,9</Tx>
    <g className="[font-family:'Noto_Sans_CJK_KR',sans-serif]">
      {WORDS.map(([t, x, y, r, c]) => (
        <Tx key={t} x={x} y={y} a="middle" s={9.400} f={c} r={r ? -45 : 0}>{t}</Tx>
      ))}
      {LATIN.map(([l, k, x, y, c, w]) => (
        <Tx key={l} x={x} y={y} a="middle" s={10} f={c} r={-45} w={w}><tspan stroke={c} strokeWidth=".6" className="font-bold">{l}</tspan>{k}</Tx>
      ))}
      <g fill="none" strokeWidth="1.300" fontSize="66" textAnchor="middle" className="font-medium">
        <text x="992" y="1207" stroke="#76b7b2">접속이</text>
        <text x="1253.500" y="1246" stroke="#4e79a7">만족합니다</text>
        <text x="1164.500" y="1327" stroke="#e15759">빠르게</text>
        <text x="1469" y="1133" dy="24.500" transform="rotate(-45 1469 1133)" stroke="#f28e2c">신뢰성</text>
      </g>
    </g>
    <circle cx="550" cy="1424.500" r="7.500" fill="#f4511e" />
    <Tx x={550} y={1424.500} a="middle" s={9} f="#ddd">X</Tx>
    <Tx x={562} y={1424} s={12} f="#c8c8c8" w={73}>감사합니다&nbsp; 강의</Tx>
  </svg>
);

const X = () => (
  <span className="absolute right-1 top-[5px] flex size-4 items-center justify-center rounded-sm bg-[#1fa60c] text-[12px] font-semibold leading-none text-white">X</span>
);

const Cells = ({ cols, cells, head, h }: { cols: string; cells: string[]; head?: boolean; h: string }) => (
  <div className={`grid border-t border-[#808080] ${cols} ${h} ${head ? "font-bold" : ""}`}>
    {cells.map((c, i) => (
      <span key={i} className={`flex items-center whitespace-nowrap pr-[3px] ${i ? "justify-end border-l border-[#808080]" : "justify-center"}`}>{c}</span>
    ))}
  </div>
);

const Tips = () => (
  <>
    <div className="absolute left-[658px] top-[864px] h-[110px] w-[410px] rounded-md bg-black/50 p-[5px] text-[12.500px] tracking-[-0.2px] text-[#e0e0e0] shadow-[2px_3px_8px_rgba(0,0,0,0.5)]">
      <div className="relative border border-[#808080]">
        <X />
        <div className="h-[43px] pt-1 text-center font-bold leading-[18px]">중소기업<br /><span className="text-[#f0f00c]">136</span></div>
        <Cells cols="grid-cols-[91px_102px_103px_1fr]" h="h-[28px]" head cells={["내 역", "부정 (N)", "긍정 (P)", "(P - N) 평균차이"]} />
        <Cells cols="grid-cols-[91px_102px_103px_1fr]" h="h-[27px]" cells={["값", "50", "86", "36"]} />
      </div>
    </div>
    <div className="absolute left-[1353px] top-[835px] h-[166px] w-[430px] rounded-md bg-black/50 p-[5px] text-[12.500px] tracking-[-0.2px] text-[#e0e0e0] shadow-[2px_3px_8px_rgba(0,0,0,0.5)]">
      <div className="relative border border-[#808080]">
        <X />
        <div className="h-[71px] px-[3px] pt-1 text-center font-bold leading-[18px]">
          매우 그렇다 (명)<br /><span className="text-[#f0f00c] tracking-[0.15px]">4-2. 업무/연구 활 : 18</span>
          <div className="mt-[3px] border-t-2 border-[#808080] pt-[3px] text-[12px] font-medium tracking-[-0.2px]">전체: 8.6%, 그룹: 72.0%</div>
        </div>
        <Cells cols="grid-cols-[96px_107px_107px_1fr]" h="h-[28px]" head cells={["내 역", "전체", "시리즈", "그룹"]} />
        <Cells cols="grid-cols-[96px_107px_107px_1fr]" h="h-[27px]" cells={["값", "210", "145", "25"]} />
        <Cells cols="grid-cols-[96px_107px_107px_1fr]" h="h-[28px]" cells={["점유율", "8.57%", "12.41%", "72.00%"]} />
      </div>
    </div>
  </>
);

const Menu = () => (
  <div className="absolute left-[1048px] top-[389px] h-[73px] w-[222px] rounded-md bg-[#c9c6ca] p-[5px] text-[12px] tracking-[-0.2px] text-[#222] shadow-[0_5px_14px_rgba(0,0,0,0.45)]">
    <div className="flex h-[21px] items-center whitespace-nowrap tracking-[0.07px]">
      <svg width="19" height="12" viewBox="0 0 19 12"><path d="M4 6.500L7 10L12.500 1.500" fill="none" stroke="#222" strokeWidth="1.800" /></svg>(척도 값 - 1) * 100 ÷ (척도 개수 - 1)
    </div>
    <div className="flex h-[21px] items-center pl-[19px]">척도 값 * 100 ÷ 척도 개수</div>
    <div className="flex h-[21px] items-center whitespace-nowrap rounded bg-[#2470dc] pl-[19px] font-bold text-white">척도 값 ÷ 환산할 척도의 중앙값 * 50</div>
  </div>
);

const Main = () => (
  <main className="w-[1379px] shrink-0 bg-[#1e1e1e]">
    <div className="flex h-[61px] items-center pl-[34px]">
      <div className="mt-[3px] flex size-10 items-center justify-center rounded-full border border-[#9e9e9e]">
        <svg width="8" height="12" viewBox="0 0 8 12"><path d="M6.500 1.500V10.500L1.500 6Z" fill="none" stroke="#9e9e9e" strokeWidth="1.500" /></svg>
      </div>
      <div className="ml-[69px] mt-[3px] flex size-10 items-center justify-center rounded-full bg-[#2b95f3] text-white"><MdDirectionsRun size={23} /></div>
      <div className="ml-[69px] mt-[3px] flex size-10 items-center justify-center rounded-full bg-[#ff9800] text-white"><MdRefresh size={24} /></div>
      <Toggle label="툴팁" className="ml-[61px] mt-[3px] w-[113px]" />
      <Toggle label="점유율" className="mt-[3px] w-[113px]" />
      <Toggle label="Top n" className="mt-[3px] w-[112px]" />
      <Toggle on={false} label="리스트" className="mt-[3px]" />
    </div>
    <TopCharts />
    <div className="mt-[5px] flex gap-[5px] pl-[5px]">
      <div className="h-[501px] w-[682px] bg-[#333]">
        <div className="flex h-[51px] items-center overflow-hidden border-b border-[#1e1e1e]">
          <svg width="21" height="20" className="mt-8 shrink-0" fill="#8a8a8a">
            {[2.500, 8.500, 14.500].map((y) => <g key={y}><circle cx="6.500" cy={y} r="2" /><circle cx="12" cy={y} r="2" /></g>)}
          </svg>
          <div className="flex pt-[7px]">
            <Pick label="차원" value="1. 귀하의 현재 소속" />
            <Pick label="메인" value="4-5. 전체평가" />
            <Pick label="비교" value="4-3. 강사 만족도" />
            <Pick label="환산" value="" />
          </div>
        </div>
        <Butterfly />
      </div>
      <div className="h-[501px] w-[682px] bg-[#333]">
        <div className="h-[51px] border-b border-[#1e1e1e] pl-12 pt-4">
          <div className="h-[26px] w-[264px] border border-[#757575] pl-[13px] text-[12px] leading-[22px] tracking-[-0.3px] text-[#eee]">개별 5점 척도 (10 문항)</div>
        </div>
        <Stacked />
      </div>
    </div>
    <div className="ml-[5px] mt-[9px] w-[1370px] bg-[#333]">
      <div className="h-[52px] border-b border-[#1e1e1e] text-center text-[28px] leading-[50px] text-[#ff9f0a]">빈도수: 91</div>
      <Cloud />
    </div>
  </main>
);

export default function App() {
  return (
    <div className="relative flex h-[1439px] w-[1904px] overflow-hidden bg-[#121212] [font-family:'Noto_Sans','Noto_Sans_CJK_KR',sans-serif]">
      <Sidebar />
      <div className="flex flex-1 flex-col">
        <Header />
        <div className="flex flex-1 pl-[5px] pt-3">
          <LeftPanel />
          <div className="ml-1 w-1 shrink-0 bg-[#616161]" />
          <Main />
        </div>
      </div>
      <div className="absolute right-0 top-[135px] h-10 w-[15px] rounded-l-lg bg-[#999]" />
      <Tips />
      <Menu />
    </div>
  );
}
